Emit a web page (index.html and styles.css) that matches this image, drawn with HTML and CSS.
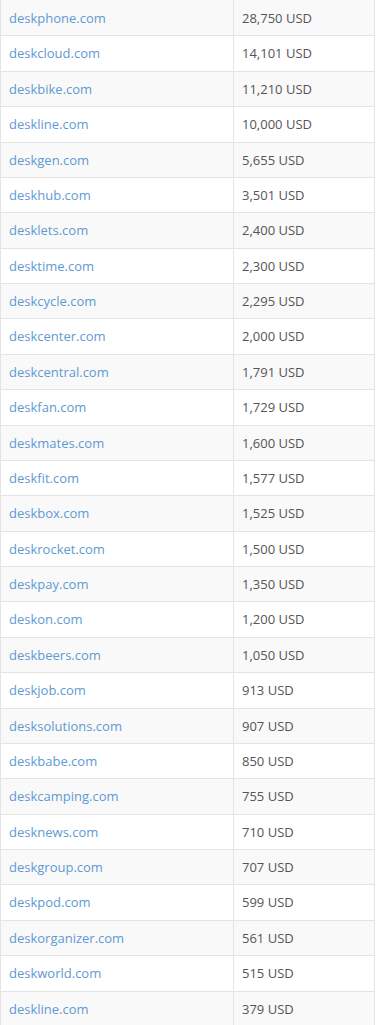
FILE: index.html
```html
<!DOCTYPE html>
<html lang="en">
<head>
<meta charset="utf-8">
<title>Domains</title>
<link rel="stylesheet" href="styles.css">
</head>
<body>
<table class="domains">
<tbody>
<tr><td class="name"><a href="#">deskphone.com</a></td><td class="price">28,750 USD</td></tr>
<tr><td class="name"><a href="#">deskcloud.com</a></td><td class="price">14,101 USD</td></tr>
<tr><td class="name"><a href="#">deskbike.com</a></td><td class="price">11,210 USD</td></tr>
<tr><td class="name"><a href="#">deskline.com</a></td><td class="price">10,000 USD</td></tr>
<tr><td class="name"><a href="#">deskgen.com</a></td><td class="price">5,655 USD</td></tr>
<tr><td class="name"><a href="#">deskhub.com</a></td><td class="price">3,501 USD</td></tr>
<tr><td class="name"><a href="#">desklets.com</a></td><td class="price">2,400 USD</td></tr>
<tr><td class="name"><a href="#">desktime.com</a></td><td class="price">2,300 USD</td></tr>
<tr><td class="name"><a href="#">deskcycle.com</a></td><td class="price">2,295 USD</td></tr>
<tr><td class="name"><a href="#">deskcenter.com</a></td><td class="price">2,000 USD</td></tr>
<tr><td class="name"><a href="#">deskcentral.com</a></td><td class="price">1,791 USD</td></tr>
<tr><td class="name"><a href="#">deskfan.com</a></td><td class="price">1,729 USD</td></tr>
<tr><td class="name"><a href="#">deskmates.com</a></td><td class="price">1,600 USD</td></tr>
<tr><td class="name"><a href="#">deskfit.com</a></td><td class="price">1,577 USD</td></tr>
<tr><td class="name"><a href="#">deskbox.com</a></td><td class="price">1,525 USD</td></tr>
<tr><td class="name"><a href="#">deskrocket.com</a></td><td class="price">1,500 USD</td></tr>
<tr><td class="name"><a href="#">deskpay.com</a></td><td class="price">1,350 USD</td></tr>
<tr><td class="name"><a href="#">deskon.com</a></td><td class="price">1,200 USD</td></tr>
<tr><td class="name"><a href="#">deskbeers.com</a></td><td class="price">1,050 USD</td></tr>
<tr><td class="name"><a href="#">deskjob.com</a></td><td class="price">913 USD</td></tr>
<tr><td class="name"><a href="#">desksolutions.com</a></td><td class="price">907 USD</td></tr>
<tr><td class="name"><a href="#">deskbabe.com</a></td><td class="price">850 USD</td></tr>
<tr><td class="name"><a href="#">deskcamping.com</a></td><td class="price">755 USD</td></tr>
<tr><td class="name"><a href="#">desknews.com</a></td><td class="price">710 USD</td></tr>
<tr><td class="name"><a href="#">deskgroup.com</a></td><td class="price">707 USD</td></tr>
<tr><td class="name"><a href="#">deskpod.com</a></td><td class="price">599 USD</td></tr>
<tr><td class="name"><a href="#">deskorganizer.com</a></td><td class="price">561 USD</td></tr>
<tr><td class="name"><a href="#">deskworld.com</a></td><td class="price">515 USD</td></tr>
<tr><td class="name"><a href="#">deskline.com</a></td><td class="price">379 USD</td></tr>
</tbody>
</table>
</body>
</html>
```

FILE: styles.css
```css
html, body {
  margin: 0;
  padding: 0;
  background: #ffffff;
}

body {
  font-family: "Open Sans", "Noto Sans", sans-serif;
  font-size: 13px;
  color: #555555;
  overflow: hidden;
}

.domains {
  width: 375px;
  border-collapse: collapse;
  border: 1px solid #e4e4e4;
  margin-top: -1px;
}

.domains td {
  border: 1px solid #e4e4e4;
  padding: 8px 8px;
  line-height: 18.37px;
  vertical-align: top;
  text-align: left;
}

.domains tr:first-child td {
  padding-top: 9px;
}

.domains tr:nth-child(odd) td {
  background: #f9f9f9;
}

.domains .name {
  width: 216px;
}

.domains .name a {
  color: #5f9ad2;
  text-decoration: none;
}

.domains .price {
  color: #555555;
}
```
